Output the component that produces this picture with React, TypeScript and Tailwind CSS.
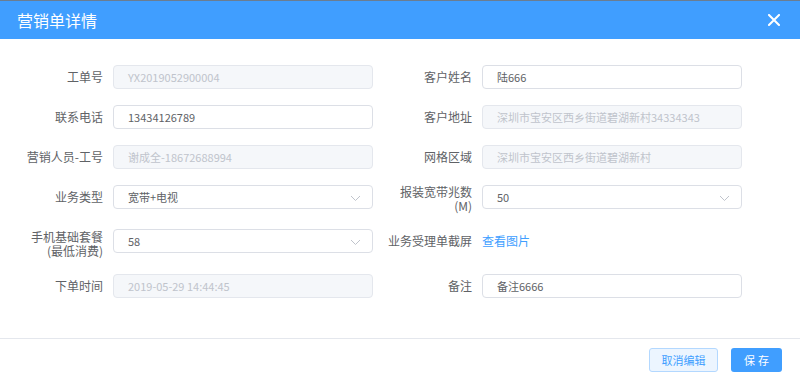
import { ReactNode } from 'react';

const font = { fontFamily: '"Noto Sans CJK SC", "Noto Sans", sans-serif' };

function Chevron() {
  return (
    <svg width="11" height="7" viewBox="0 0 11 7" className="absolute right-[11px] top-[9px]">
      <path d="M1 1 L5.5 5.5 L10 1" fill="none" stroke="#C0C4CC" strokeWidth="1" />
    </svg>
  );
}

function Field({ value, disabled, select }: { value: string; disabled?: boolean; select?: boolean }) {
  return (
    <div
      className={`relative w-[260px] h-[24px] rounded-[4px] border pl-[14px] text-[11px] leading-[22px] ${
        disabled ? 'bg-[#F5F7FA] border-[#E4E7ED] text-[#C0C4CC]' : 'bg-white border-[#DCDFE6] text-[#606266]'
      }`}
    >
      {value}
      {select && <Chevron />}
    </div>
  );
}

function Item({ label, children, twoLine }: { label: ReactNode; children: ReactNode; twoLine?: boolean }) {
  return (
    <div className="flex items-start gap-[10px]">
      <div
        className={`w-[90px] shrink-0 text-right text-[12px] text-[#606266] whitespace-nowrap ${
          twoLine ? 'leading-[14px]' : 'leading-[24px]'
        }`}
      >
        {label}
      </div>
      {children}
    </div>
  );
}

function Row({ children }: { children: ReactNode }) {
  return <div className="flex gap-[9px]">{children}</div>;
}

export default function App() {
  return (
    <div className="w-[800px] h-[380px] bg-white flex flex-col" style={font}>
      <div className="h-[39px] bg-[#409EFF] border-t border-[#6B7D91] flex items-center justify-between pl-[17px] pr-[20px]">
        <span className="text-white text-[16px]">营销单详情</span>
        <svg width="12" height="12" viewBox="0 0 12 12">
          <path d="M1 1 L11 11 M11 1 L1 11" stroke="white" strokeWidth="2" strokeLinecap="square" />
        </svg>
      </div>

      <div className="flex-1 flex flex-col gap-[16px] pt-[26px] pl-[13px]">
        <Row>
          <Item label="工单号"><Field value="YX2019052900004" disabled /></Item>
          <Item label="客户姓名"><Field value="陆666" /></Item>
        </Row>
        <Row>
          <Item label="联系电话"><Field value="13434126789" /></Item>
          <Item label="客户地址"><Field value="深圳市宝安区西乡街道碧湖新村34334343" disabled /></Item>
        </Row>
        <Row>
          <Item label="营销人员-工号"><Field value="谢成全-18672688994" disabled /></Item>
          <Item label="网格区域"><Field value="深圳市宝安区西乡街道碧湖新村" disabled /></Item>
        </Row>
        <Row>
          <Item label="业务类型"><Field value="宽带+电视" select /></Item>
          <Item label={<>报装宽带兆数<br />(M)</>} twoLine><Field value="50" select /></Item>
        </Row>
        <Row>
          <Item label={<div className="pt-[1px]">手机基础套餐<br />(最低消费)</div>} twoLine><Field value="58" select /></Item>
          <Item label="业务受理单截屏">
            <span className="text-[12px] leading-[24px] text-[#409EFF]">查看图片</span>
          </Item>
        </Row>
        <Row>
          <Item label="下单时间"><Field value="2019-05-29 14:44:45" disabled /></Item>
          <Item label="备注"><Field value="备注6666" /></Item>
        </Row>
      </div>

      <div className="h-[42px] border-t border-[#E4E7ED] flex items-start justify-end gap-[13px] pt-[9px] pr-[18px]">
        <button className="w-[69px] h-[24px] rounded-[3px] border border-[#B3D8FF] bg-[#ECF5FF] text-[#409EFF] text-[11px]">
          取消编辑
        </button>
        <button className="w-[51px] h-[24px] rounded-[3px] bg-[#409EFF] text-white text-[11px] tracking-[3px] pl-[3px]">
          保存
        </button>
      </div>
    </div>
  );
}
